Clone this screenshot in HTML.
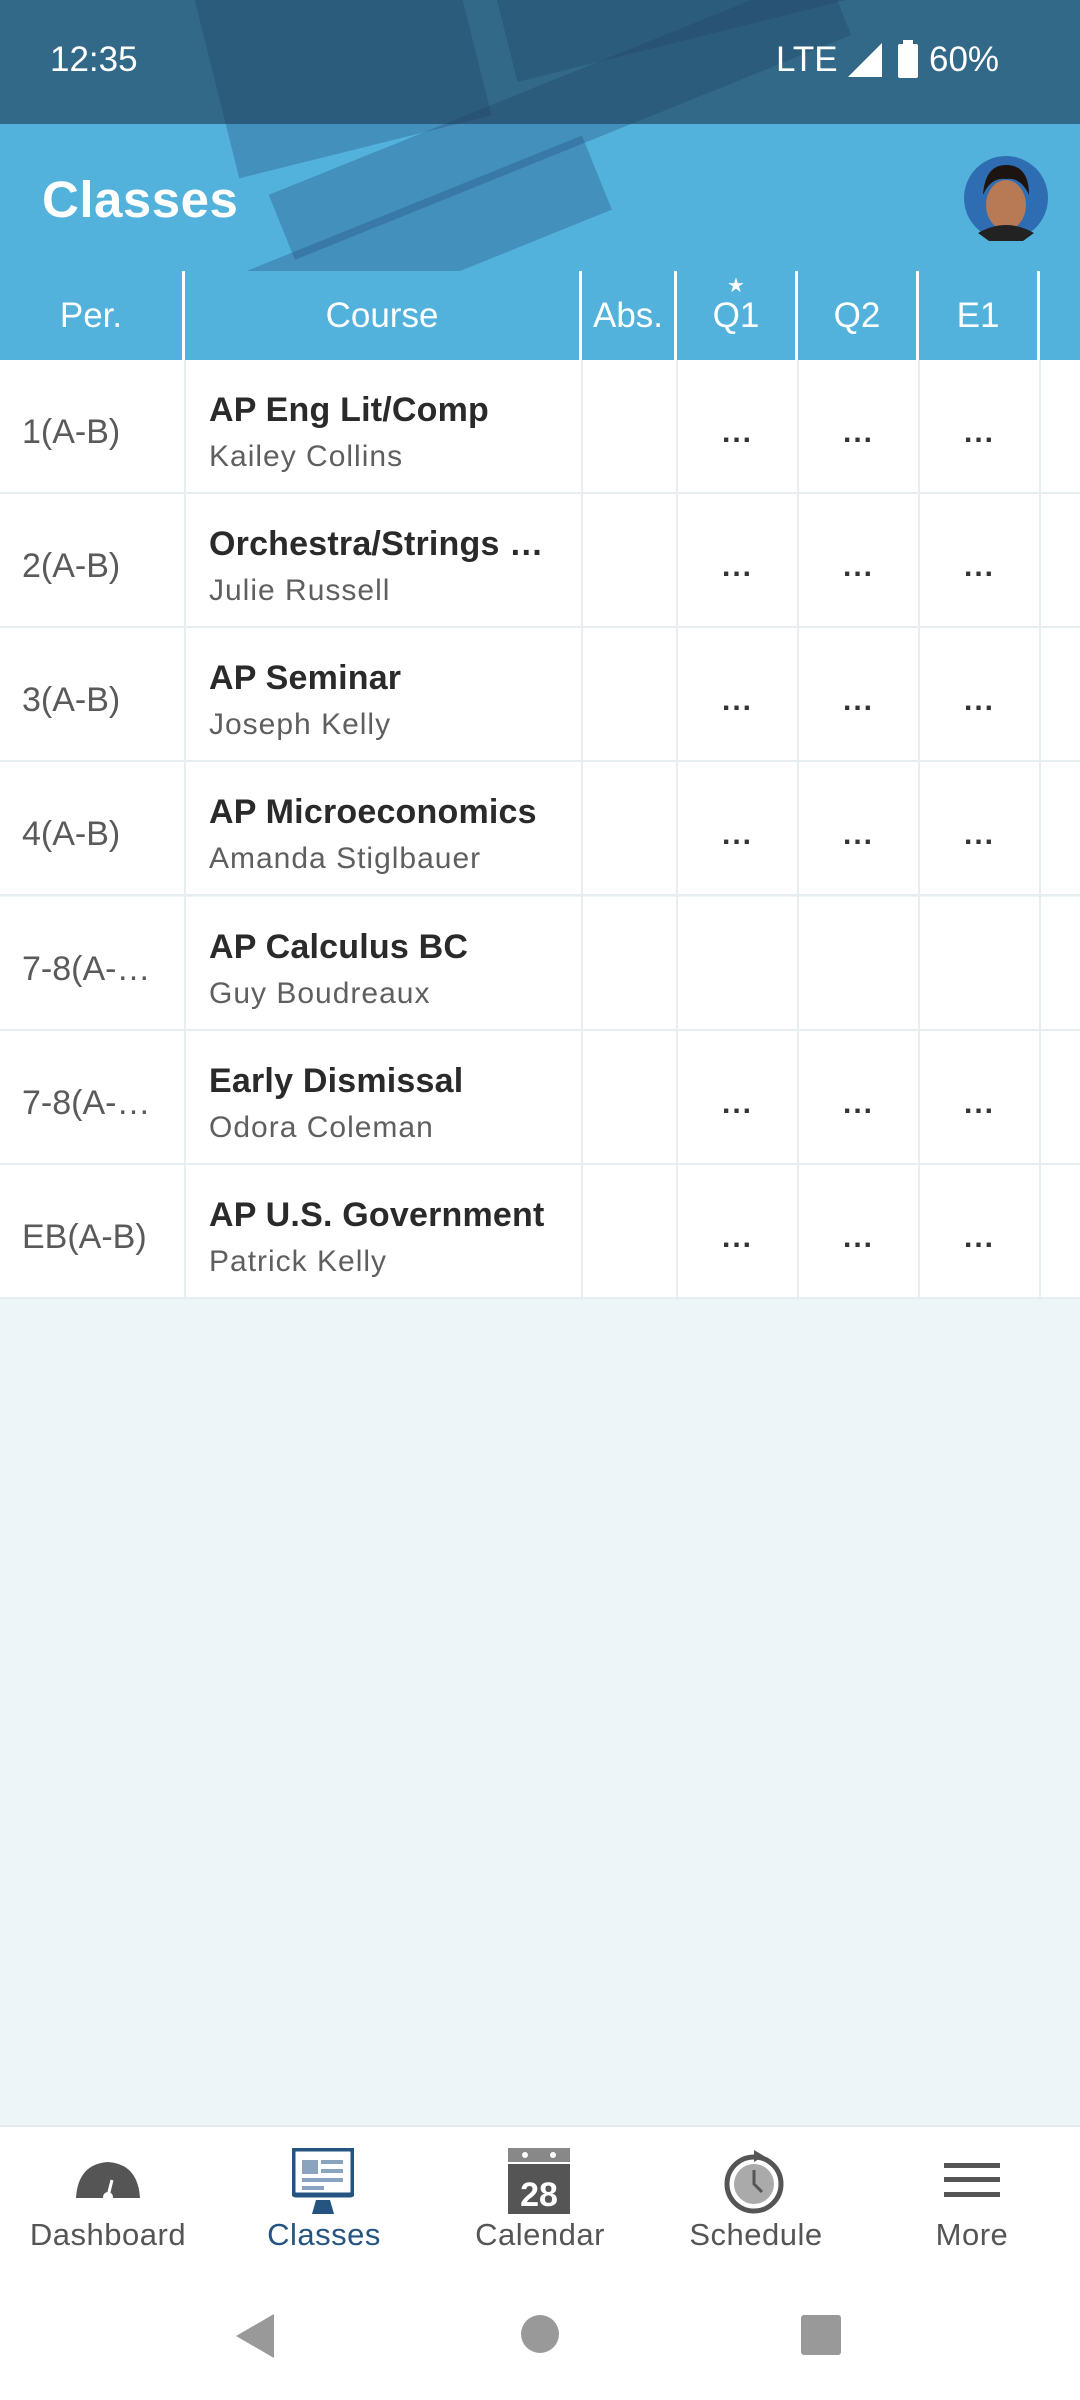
<!DOCTYPE html>
<html><head><meta charset="utf-8"><style>
*{margin:0;padding:0;box-sizing:border-box}
body{width:1080px;height:2400px;position:relative;overflow:hidden;background:#eef5f8;font-family:"Liberation Sans",sans-serif}
.hdr{position:absolute;left:0;top:0;width:1080px;height:271px;background:#52b2dc;overflow:hidden}
.sb{position:absolute;left:0;top:0;width:1080px;height:124px;background:rgba(30,60,85,.62)}
.stripe{position:absolute;background:rgba(40,80,130,.35)}
.t{position:absolute;color:#fff}
.th{position:absolute;top:271px;height:89px;background:#52b2dc;color:#fff;font-size:35px;display:flex;align-items:center;justify-content:center;border-right:3px solid #fff}
.row{position:absolute;left:0;width:1080px;height:134px;background:#fff;border-bottom:2px solid #e6eef2}
.vl{position:absolute;top:360px;height:940px;width:2px;background:#e6eef2}
.per{position:absolute;left:22px;font-size:34px;color:#5a5a5a;top:53px}
.cn{position:absolute;left:209px;top:31px;font-size:34px;color:#2a2a2a;font-weight:bold;letter-spacing:0.2px}
.tn{position:absolute;left:209px;top:80px;font-size:30px;color:#5f5f5f;letter-spacing:1px}
.d{position:absolute;top:56px;font-size:30px;color:#333;font-weight:bold;width:121px;text-align:center;letter-spacing:2px}
.nav{position:absolute;left:0;top:2125px;width:1080px;height:275px;background:#fff;border-top:2px solid #e4eaee}
.lbl{position:absolute;top:2217px;font-size:31px;color:#555;width:216px;text-align:center;letter-spacing:.5px}
</style></head><body>
<div class="hdr">
 <div class="stripe" style="left:210px;top:-60px;width:260px;height:210px;transform:rotate(-14deg)"></div>
 <div class="stripe" style="left:500px;top:-60px;width:360px;height:100px;transform:rotate(-14deg)"></div>
 <div class="stripe" style="left:260px;top:80px;width:600px;height:70px;transform:rotate(-22deg)"></div>
 <div class="stripe" style="left:250px;top:200px;width:360px;height:80px;transform:rotate(-22deg)"></div>
 <div class="sb"></div>
 <div class="t" style="left:50px;top:40px;font-size:35px">12:35</div>
 <div class="t" style="left:776px;top:40px;font-size:35px">LTE</div>
 <svg style="position:absolute;left:848px;top:43px" width="34" height="34"><polygon points="34,0 34,34 0,34" fill="#fff"/></svg>
 <svg style="position:absolute;left:898px;top:40px" width="20" height="38"><rect x="5" y="0" width="10" height="4" fill="#fff"/><rect x="0" y="4" width="20" height="34" rx="2" fill="#fff"/></svg>
 <div class="t" style="left:929px;top:40px;font-size:35px">60%</div>
 <div class="t" style="left:42px;top:170px;font-size:51px;font-weight:bold;letter-spacing:0.5px">Classes</div>
 <svg style="position:absolute;left:963px;top:155px" width="86" height="86"><circle cx="43" cy="43" r="42" fill="#2f6db3"/><ellipse cx="43" cy="50" rx="20" ry="25" fill="#b77a55"/><path d="M20 40 Q22 10 43 10 Q66 10 66 40 Q58 22 43 24 Q28 22 20 40Z" fill="#1d1410"/><path d="M15 78 Q43 62 71 78 L60 86 L26 86Z" fill="#222"/></svg>
</div>
<div class="th" style="left:0;width:185px">Per.</div>
<div class="th" style="left:185px;width:397px">Course</div>
<div class="th" style="left:582px;width:95px">Abs.</div>
<div class="th" style="left:677px;width:121px">Q1<span style="position:absolute;top:2px;font-size:20px">★</span></div>
<div class="th" style="left:798px;width:121px">Q2</div>
<div class="th" style="left:919px;width:121px">E1</div>
<div class="th" style="left:1040px;width:60px"></div>

<div class="row" style="top:360px"><div class="per">1(A-B)</div><div class="cn">AP Eng Lit/Comp</div><div class="tn">Kailey Collins</div><div class="d" style="left:677px">...</div><div class="d" style="left:798px">...</div><div class="d" style="left:919px">...</div></div>
<div class="row" style="top:494px"><div class="per">2(A-B)</div><div class="cn">Orchestra/Strings …</div><div class="tn">Julie Russell</div><div class="d" style="left:677px">...</div><div class="d" style="left:798px">...</div><div class="d" style="left:919px">...</div></div>
<div class="row" style="top:628px"><div class="per">3(A-B)</div><div class="cn">AP Seminar</div><div class="tn">Joseph Kelly</div><div class="d" style="left:677px">...</div><div class="d" style="left:798px">...</div><div class="d" style="left:919px">...</div></div>
<div class="row" style="top:762px"><div class="per">4(A-B)</div><div class="cn">AP Microeconomics</div><div class="tn">Amanda Stiglbauer</div><div class="d" style="left:677px">...</div><div class="d" style="left:798px">...</div><div class="d" style="left:919px">...</div></div>
<div class="row" style="top:897px"><div class="per">7-8(A-…</div><div class="cn">AP Calculus BC</div><div class="tn">Guy Boudreaux</div></div>
<div class="row" style="top:1031px"><div class="per">7-8(A-…</div><div class="cn">Early Dismissal</div><div class="tn">Odora Coleman</div><div class="d" style="left:677px">...</div><div class="d" style="left:798px">...</div><div class="d" style="left:919px">...</div></div>
<div class="row" style="top:1165px"><div class="per">EB(A-B)</div><div class="cn">AP U.S. Government</div><div class="tn">Patrick Kelly</div><div class="d" style="left:677px">...</div><div class="d" style="left:798px">...</div><div class="d" style="left:919px">...</div></div>
<div class="vl" style="left:184px"></div><div class="vl" style="left:581px"></div><div class="vl" style="left:676px"></div><div class="vl" style="left:797px"></div><div class="vl" style="left:918px"></div><div class="vl" style="left:1039px"></div>

<div class="nav"></div>
<svg style="position:absolute;left:76px;top:2160px" width="64" height="40"><path d="M0 38 Q2 4 32 2 Q62 4 64 38Z" fill="#555"/><path d="M32 36 L36 20" stroke="#fff" stroke-width="3"/><circle cx="32" cy="37" r="5" fill="#fff"/></svg>
<svg style="position:absolute;left:292px;top:2148px" width="62" height="66"><rect x="1" y="1" width="60" height="46" rx="3" fill="#fff" stroke="#265480" stroke-width="5"/><rect x="10" y="12" width="16" height="14" fill="#8aa4c0"/><rect x="29" y="12" width="22" height="4" fill="#8aa4c0"/><rect x="29" y="21" width="22" height="4" fill="#8aa4c0"/><rect x="10" y="30" width="41" height="4" fill="#8aa4c0"/><rect x="10" y="38" width="22" height="4" fill="#8aa4c0"/><polygon points="24,52 38,52 42,66 20,66" fill="#265480"/></svg>
<svg style="position:absolute;left:508px;top:2148px" width="62" height="66"><rect x="0" y="0" width="62" height="14" fill="#888"/><circle cx="17" cy="7" r="3" fill="#fff"/><circle cx="45" cy="7" r="3" fill="#fff"/><rect x="0" y="16" width="62" height="50" fill="#555"/><text x="31" y="58" font-family="Liberation Sans" font-weight="bold" font-size="34" fill="#fff" text-anchor="middle">28</text></svg>
<svg style="position:absolute;left:724px;top:2146px" width="62" height="70"><circle cx="30" cy="38" r="27" fill="none" stroke="#555" stroke-width="5"/><circle cx="30" cy="38" r="20" fill="#aaa"/><path d="M30 24 L30 38 L38 46" stroke="#555" stroke-width="3" fill="none"/><path d="M30 4 L40 10 L30 16Z" fill="#555"/></svg>
<svg style="position:absolute;left:944px;top:2163px" width="56" height="34"><rect y="0" width="56" height="5" fill="#555"/><rect y="14" width="56" height="5" fill="#555"/><rect y="29" width="56" height="5" fill="#555"/></svg>
<div class="lbl" style="left:0">Dashboard</div>
<div class="lbl" style="left:216px;color:#265480">Classes</div>
<div class="lbl" style="left:432px">Calendar</div>
<div class="lbl" style="left:648px">Schedule</div>
<div class="lbl" style="left:864px">More</div>
<svg style="position:absolute;left:236px;top:2314px" width="38" height="44"><polygon points="38,0 38,44 0,22" fill="#999"/></svg>
<div style="position:absolute;left:521px;top:2315px;width:38px;height:38px;border-radius:50%;background:#999"></div>
<div style="position:absolute;left:801px;top:2315px;width:40px;height:40px;border-radius:3px;background:#999"></div>
</body></html>
